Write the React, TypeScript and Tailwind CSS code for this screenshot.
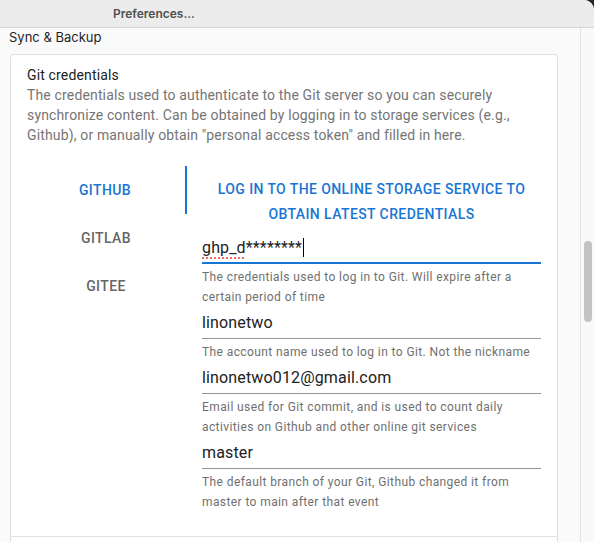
const tabs = ["GitHub", "GitLab", "Gitee"];

interface FieldProps {
  value: React.ReactNode;
  helper: string;
  focused?: boolean;
}

const Field = ({ value, helper, focused = false }: FieldProps) => (
  <div>
    <div
      className={`flex h-[32px] items-start pt-[4px] ${
        focused ? "border-b-2 border-[#1976d2]" : "border-b border-[#949494]"
      }`}
    >
      <div className="text-[16px] leading-[23px] tracking-[0.15px] text-[#212121]">{value}</div>
    </div>
    <p className="mt-[3px] text-[12px] leading-[20px] tracking-[0.4px] text-[#707070]">
      {helper}
    </p>
  </div>
);

export default function App() {
  return (
    <div className="h-[542px] w-[594px] overflow-hidden bg-[#262626]">
      <div className="flex h-full flex-col overflow-hidden rounded-tr-[10px] bg-[#fafafa]">
        <header className="h-[28px] shrink-0 border-b border-[#d6d6d6] bg-[#ececec] pl-[113px] font-['Inter',sans-serif] text-[12px] font-semibold leading-[27px] text-[#4f4f4f]">
          Preferences...
        </header>

        <div className="flex min-h-0 flex-1">
          <main className="flex min-w-0 flex-1 flex-col pl-[10px] pr-[22px]">
            <h2 className="-ml-px font-['Inter',sans-serif] text-[13px] leading-[18px] text-[#1f1f1f]">
              Sync &amp; Backup
            </h2>

            <section className="mt-[8px] flex-1 rounded-[4px] border border-[#e0e0e0] bg-white font-['Roboto',sans-serif]">
              <div className="border-b border-[#e0e0e0] px-4 pb-[24px] pt-[10px]">
                <h3 className="text-[14px] leading-[20px] tracking-[0.15px] text-[#212121]">
                  Git credentials
                </h3>
                <p className="text-[14px] leading-[20px] tracking-[0.15px] text-[#757575]">
                  The credentials used to authenticate to the Git server so you can securely
                  synchronize content. Can be obtained by logging in to storage services (e.g.,
                  Github), or manually obtain "personal access token" and filled in here.
                </p>

                <div className="mt-[21px] flex">
                  <div className="flex w-[160px] shrink-0 flex-col">
                    {tabs.map((tab, i) => (
                      <div
                        key={tab}
                        className={`flex h-[48px] items-center justify-center pr-[2px] text-[14px] font-medium uppercase tracking-[0.4px] ${
                          i === 0
                            ? "border-r-2 border-[#1976d2] text-[#1976d2]"
                            : "text-[#666666]"
                        }`}
                      >
                        {tab}
                      </div>
                    ))}
                  </div>

                  <div className="min-w-0 flex-1 pl-[15px] pt-[5px]">
                    <button className="w-full px-2 py-[6px] text-center text-[14px] font-medium uppercase leading-[24.5px] tracking-[0.4px] text-[#1976d2]">
                      Log in to the online storage service to obtain latest credentials
                    </button>

                    <Field
                      focused
                      value={
                        <span className="flex items-center">
                          <span className="underline decoration-[#ef6b6b] decoration-dotted decoration-2 underline-offset-[4px]">
                            ghp_d
                          </span>
                          <span>********</span>
                          <span className="ml-px h-[19px] w-px bg-black" />
                        </span>
                      }
                      helper="The credentials used to log in to Git. Will expire after a certain period of time"
                    />
                    <Field
                      value="linonetwo"
                      helper="The account name used to log in to Git. Not the nickname"
                    />
                    <Field
                      value="linonetwo012@gmail.com"
                      helper="Email used for Git commit, and is used to count daily activities on Github and other online git services"
                    />
                    <Field
                      value="master"
                      helper="The default branch of your Git, Github changed it from master to main after that event"
                    />
                  </div>
                </div>
              </div>
              <div className="h-[40px]" />
            </section>
          </main>

          <aside className="w-[14px] shrink-0 border-l border-[#e3e3e3] bg-[#f9f9f9] pt-[213px]">
            <div className="mx-auto h-[81px] w-[8px] rounded-full bg-[#c3c3c3]" />
          </aside>
        </div>
      </div>
    </div>
  );
}
